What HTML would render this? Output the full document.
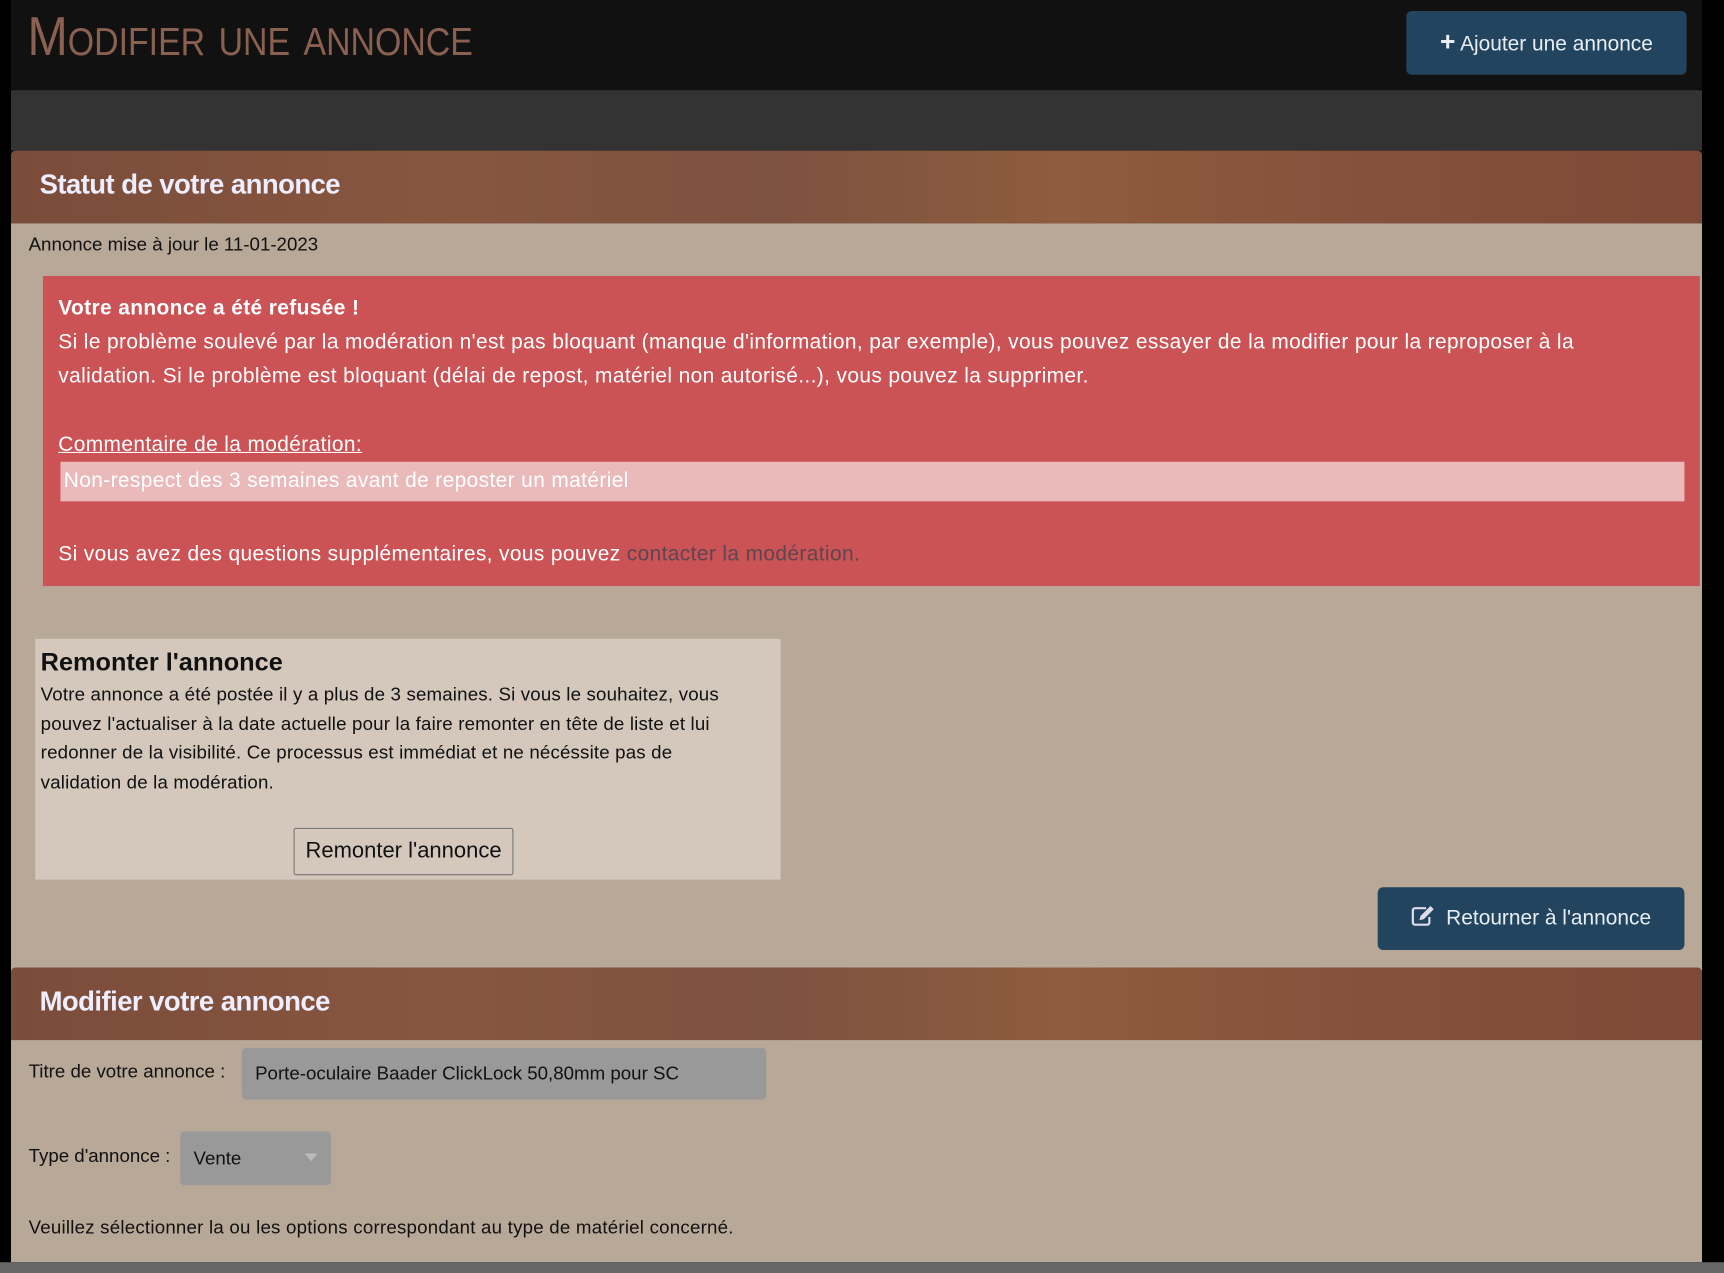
<!DOCTYPE html>
<html><head><meta charset="utf-8"><style>
html,body{margin:0;padding:0;background:#000;width:1724px;height:1273px;overflow:hidden}
#w{position:absolute;left:0;top:0;width:1568px;height:1158px;transform:scale(1.0995);transform-origin:0 0;font-family:"Liberation Sans",sans-serif;color:#111}
.a{position:absolute;white-space:nowrap}
.hdr{position:absolute;left:10px;width:1538px;height:66px;background:linear-gradient(90deg,#7a4c3a 0%,#87563f 25%,#7e5240 45%,#8e5c3e 62%,#85513c 80%,#7d4a37 100%);border-radius:4px 4px 0 0}
.hdr span{position:absolute;left:26px;top:17px;font-size:25px;color:#eef;font-weight:bold;letter-spacing:-0.5px}
.btn{position:absolute;background:#22445f;color:#e8eef4;border-radius:5px;font-size:19px;text-align:center}
</style></head><body><div id="w">
<div class="a" style="left:10px;top:0;width:1538px;height:82px;background:#111;border-radius:0 0 4px 4px"></div>
<div class="a" style="left:25px;top:5px;color:#8a6150;font-size:50px;font-variant:small-caps;transform:scaleX(0.88);transform-origin:0 0;line-height:56px">Modifier une annonce</div>
<div class="btn" style="left:1279px;top:10px;width:255px;height:58px;line-height:58px;border-radius:5px"><b style="font-size:24px">+</b> Ajouter une annonce</div>
<div class="a" style="left:10px;top:82px;width:1538px;height:55px;background:#333"></div>
<div class="a" style="left:10px;top:203px;width:1538px;height:945px;background:#b8a898"></div>
<div class="hdr" style="top:137px"><span>Statut de votre annonce</span></div>
<div class="a" style="left:26px;top:213px;font-size:17px">Annonce mise à jour le 11-01-2023</div>
<div class="a" style="left:39px;top:251px;width:1507px;height:282px;background:#cb5355;color:#fff;font-size:19px;line-height:31px;letter-spacing:0.35px">
<div style="position:absolute;left:14px;top:14px;white-space:normal;width:1470px"><b>Votre annonce a été refusée !</b><br>Si le problème soulevé par la modération n'est pas bloquant (manque d'information, par exemple), vous pouvez essayer de la modifier pour la reproposer à la validation. Si le problème est bloquant (délai de repost, matériel non autorisé...), vous pouvez la supprimer.<br><br><u>Commentaire de la modération:</u></div>
<div style="position:absolute;left:16px;top:169px;width:1474px;height:36px;background:#eababa;line-height:36px;padding-left:3px;color:#fff">Non-respect des 3 semaines avant de reposter un matériel</div>
<div style="position:absolute;left:14px;top:238px">Si vous avez des questions supplémentaires, vous pouvez <span style="color:#5c4650">contacter la modération.</span></div>
</div>
<div class="a" style="left:32px;top:581px;width:678px;height:219px;background:#d4c8bc">
<div style="position:absolute;left:5px;top:8px;font-size:23px;font-weight:bold">Remonter l'annonce</div>
<div style="position:absolute;left:5px;top:38px;width:650px;white-space:normal;font-size:17px;line-height:26.5px;letter-spacing:0.15px">Votre annonce a été postée il y a plus de 3 semaines. Si vous le souhaitez, vous pouvez l'actualiser à la date actuelle pour la faire remonter en tête de liste et lui redonner de la visibilité. Ce processus est immédiat et ne nécéssite pas de validation de la modération.</div>
<div style="position:absolute;left:235px;top:172px;width:198px;height:41px;border:1px solid #777;border-radius:2px;font-size:20px;line-height:41px;text-align:center">Remonter l'annonce</div>
</div>
<div class="btn" style="left:1253px;top:807px;width:279px;height:57px;line-height:57px"><svg width="22" height="20" viewBox="0 0 22 20" style="vertical-align:-2px;margin-right:10px"><path d="M14 3H4a2 2 0 0 0-2 2v11a2 2 0 0 0 2 2h11a2 2 0 0 0 2-2v-5" fill="none" stroke="#dde" stroke-width="2"/><path d="M18 1l3 3-9 9-4 1 1-4z" fill="#dde"/></svg>Retourner à l'annonce</div>
<div class="hdr" style="top:880px"><span>Modifier votre annonce</span></div>
<div class="a" style="left:26px;top:965px;font-size:17px">Titre de votre annonce :</div>
<div class="a" style="left:220px;top:953px;width:477px;height:47px;background:#999;border-radius:4px;font-size:17px;line-height:47px;text-indent:12px">Porte-oculaire Baader ClickLock 50,80mm pour SC</div>
<div class="a" style="left:26px;top:1042px;font-size:17px">Type d'annonce :</div>
<div class="a" style="left:164px;top:1029px;width:137px;height:49px;background:#999;border-radius:4px;font-size:17px;line-height:49px;text-indent:12px">Vente<span style="position:absolute;left:113px;top:20px;width:0;height:0;border-left:6px solid transparent;border-right:6px solid transparent;border-top:7px solid #bbb"></span></div>
<div class="a" style="left:26px;top:1107px;font-size:17px;letter-spacing:0.2px">Veuillez sélectionner la ou les options correspondant au type de matériel concerné.</div>
<div class="a" style="left:0;top:1148px;width:1568px;height:10px;background:#666"></div>
</div></body></html>
